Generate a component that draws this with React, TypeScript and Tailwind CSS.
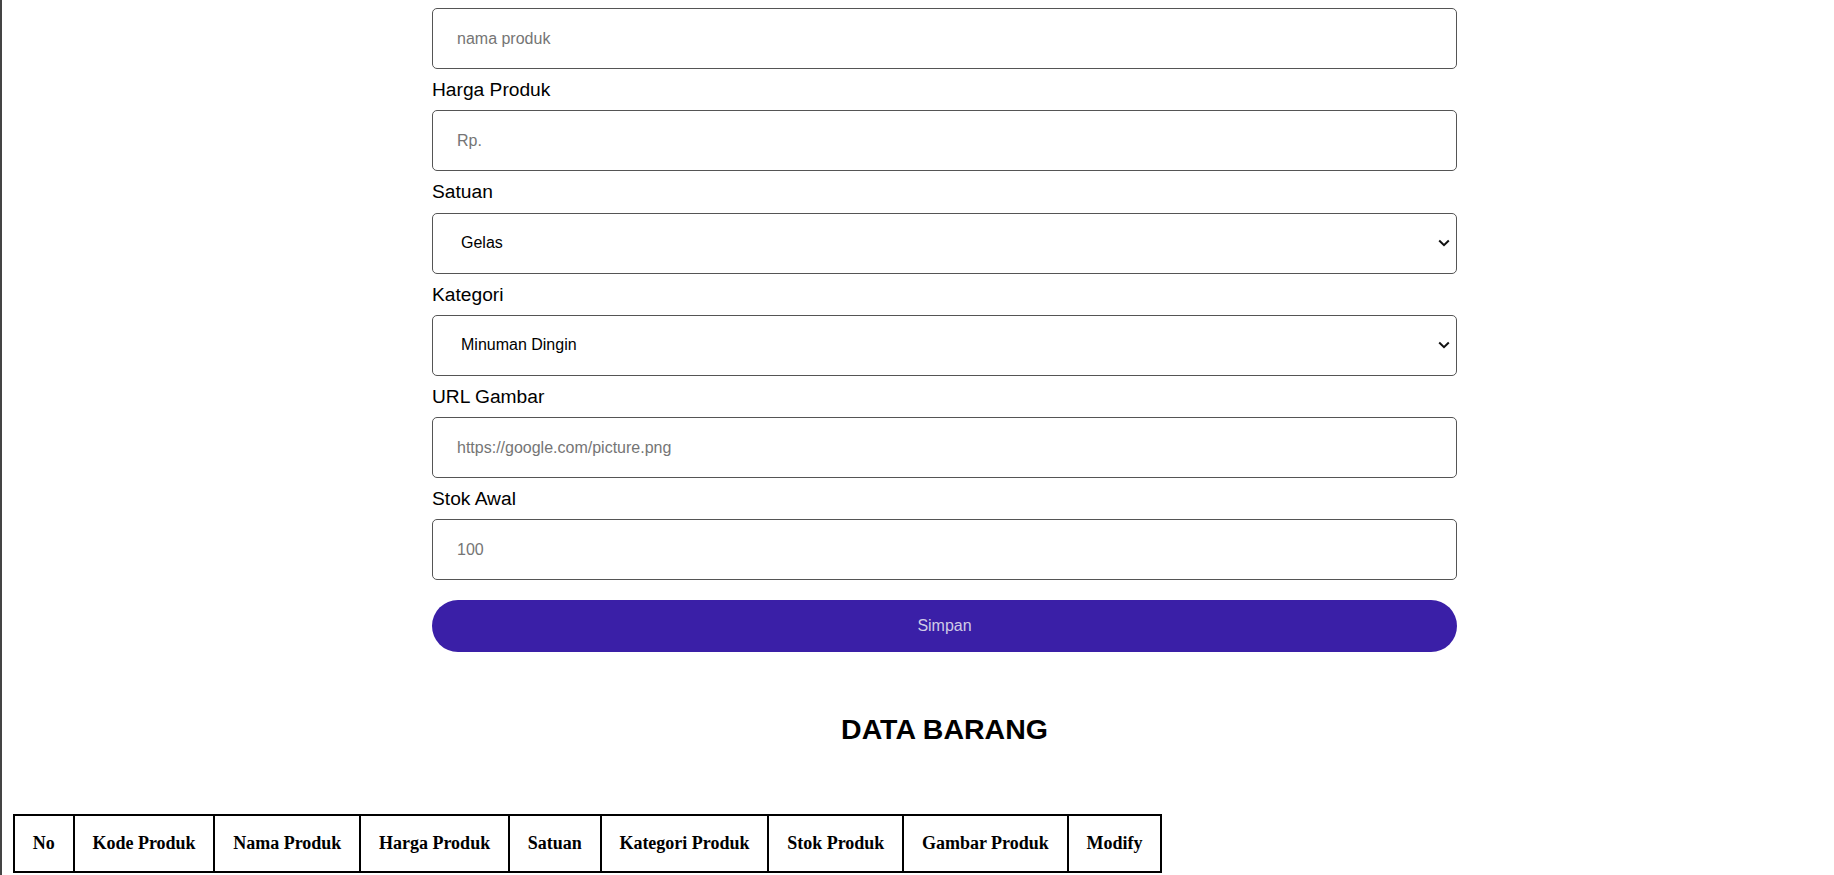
const columns = [
  "No",
  "Kode Produk",
  "Nama Produk",
  "Harga Produk",
  "Satuan",
  "Kategori Produk",
  "Stok Produk",
  "Gambar Produk",
  "Modify",
];

const font = { fontFamily: '"Liberation Sans", Arial, sans-serif' };

function Label({ children }: { children: string }) {
  return (
    <label className="block mt-[10px] mb-[9.3px] text-[19.2px] leading-[22px] text-black">
      {children}
    </label>
  );
}

function TextInput({ placeholder }: { placeholder: string }) {
  return (
    <input
      type="text"
      placeholder={placeholder}
      className="block w-full h-[61px] px-6 border border-[#555] rounded-[5px] text-[16px] text-black placeholder:text-[#757575] bg-white outline-none"
    />
  );
}

function SelectInput({ options }: { options: string[] }) {
  return (
    <div className="relative">
      <select className="block w-full h-[61px] pl-7 pr-8 border border-[#555] rounded-[5px] text-[16px] text-black bg-white appearance-none outline-none">
        {options.map((o) => (
          <option key={o}>{o}</option>
        ))}
      </select>
      <svg
        className="absolute right-[7px] top-1/2 -translate-y-1/2 pointer-events-none"
        width="12"
        height="8"
        viewBox="0 0 12 8"
        fill="none"
        stroke="#111"
        strokeWidth="2"
      >
        <path d="M1.2 1.5 L6 6.2 L10.8 1.5" />
      </svg>
    </div>
  );
}

export default function App() {
  return (
    <div className="h-[875px] overflow-hidden bg-white border-l-2 border-[#444]" style={font}>
      {/* Form */}
      <div className="ml-[430px] w-[1025px] pt-[8px]">
        <TextInput placeholder="nama produk" />

        <Label>Harga Produk</Label>
        <TextInput placeholder="Rp." />

        <Label>Satuan</Label>
        <SelectInput options={["Gelas", "Porsi", "Botol"]} />

        <Label>Kategori</Label>
        <SelectInput options={["Minuman Dingin", "Minuman Panas", "Makanan"]} />

        <Label>URL Gambar</Label>
        <TextInput placeholder="https://google.com/picture.png" />

        <Label>Stok Awal</Label>
        <TextInput placeholder="100" />

        <button className="block w-full h-[52px] mt-[19.5px] rounded-full bg-[#3a1fa7] text-[16px] text-[#cfcbe6]">
          Simpan
        </button>

        <h2 className="mt-[61px] text-center text-[28.5px] leading-[32px] font-bold text-black">
          DATA BARANG
        </h2>
      </div>

      {/* Table */}
      <table
        className="ml-[11px] mt-[69px] border-collapse border-2 border-black"
        style={{ fontFamily: '"Liberation Serif", "Times New Roman", serif' }}
      >
        <thead>
          <tr>
            {columns.map((c) => (
              <th
                key={c}
                className="border-2 border-black px-[17.8px] py-[17px] text-[18px] leading-[21px] font-bold text-black whitespace-nowrap"
              >
                {c}
              </th>
            ))}
          </tr>
        </thead>
        <tbody />
      </table>
    </div>
  );
}
